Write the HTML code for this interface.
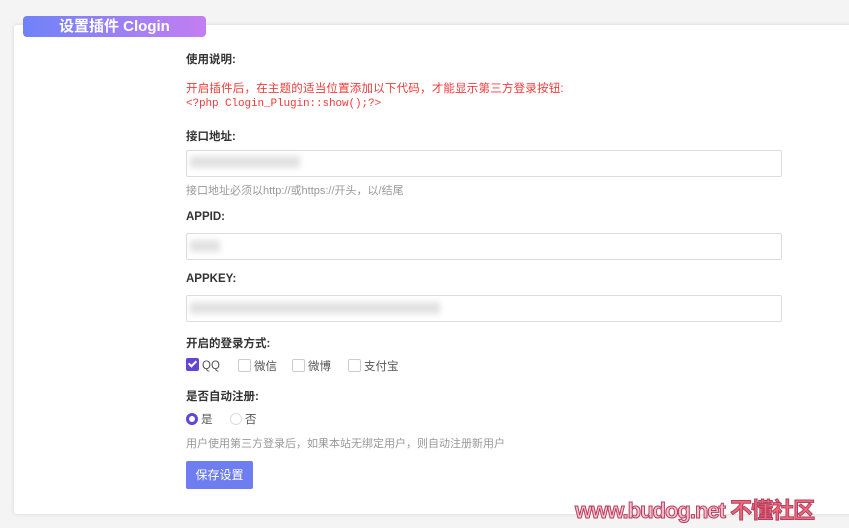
<!DOCTYPE html>
<html><head><meta charset="utf-8"><style>
body{margin:0;width:849px;height:528px;background:#f4f4f4;font-family:"Liberation Sans","Noto Sans CJK SC",sans-serif;position:relative;overflow:hidden}
.card{position:absolute;left:14px;top:25px;width:850px;height:489px;background:#fff;box-shadow:0 0 4px rgba(0,0,0,.12);border-radius:3px}
.badge{position:absolute;left:23px;top:16px;width:183px;height:21px;border-radius:4px;background:linear-gradient(90deg,#6f82f8,#c47ef2);color:#fff;font-weight:bold;font-size:15px;line-height:21px;text-indent:36px}
.a{position:absolute;left:186px;font-size:11.5px;color:#333}
.b{font-weight:bold}
.red{color:#f23a3a;letter-spacing:0.2px}
.hint{color:#999;font-size:11px}
.inp{position:absolute;left:186px;width:594px;height:25px;border:1px solid #ddd;border-radius:2px;background:#fff}
.blur{position:absolute;height:12px;background:#e2e2e2;filter:blur(3px)}
.cb{display:inline-block;width:11px;height:11px;border:1px solid #ccc;border-radius:2px;vertical-align:-2px;margin-right:3px}
.on{background:#6244d8;border-color:#6244d8;position:relative}
.on:after{content:"";position:absolute;left:3px;top:0px;width:3px;height:6px;border:solid #fff;border-width:0 2px 2px 0;transform:rotate(45deg)}
.rd{display:inline-block;width:10px;height:10px;border-radius:50%;border:1px solid #ddd;vertical-align:-2px;margin-right:3px}
.rdon{border:3px solid #6244d8;width:6px;height:6px}
.it{position:absolute;top:0;white-space:nowrap}
.btn{position:absolute;left:186px;top:461px;width:67px;height:28px;background:#6e7df0;color:#fff;font-size:12px;line-height:28px;text-align:center;border-radius:2px}
.wm{position:absolute;left:575px;top:493px;font-size:22px;font-weight:bold;color:#f9bfd0;-webkit-text-stroke:1px #b34060;letter-spacing:-1px}
.wm span{color:#f06a7a}
</style></head><body>
<div class="card"></div>
<div class="badge">设置插件 Clogin</div>
<div class="a b" style="top:51px">使用说明:</div>
<div class="a red" style="top:80px">开启插件后，在主题的适当位置添加以下代码，才能显示第三方登录按钮:</div>
<div class="a red" style="top:98px;font-family:'Liberation Mono',monospace;font-size:11px;letter-spacing:-0.1px">&lt;?php Clogin_Plugin::show();?&gt;</div>
<div class="a b" style="top:128px">接口地址:</div>
<div class="inp" style="top:150px"></div>
<div class="blur" style="left:190px;top:156px;width:110px"></div>
<div class="a hint" style="top:182px">接口地址必须以http://或https://开头，以/结尾</div>
<div class="a b" style="top:211px">APPID:</div>
<div class="inp" style="top:233px"></div>
<div class="blur" style="left:190px;top:240px;width:30px"></div>
<div class="a b" style="top:273px">APPKEY:</div>
<div class="inp" style="top:295px"></div>
<div class="blur" style="left:190px;top:302px;width:250px"></div>
<div class="a b" style="top:335px">开启的登录方式:</div>
<div class="a" style="top:358px;color:#555;width:300px;height:16px">
<span class="it" style="left:0"><span class="cb on"></span>QQ</span>
<span class="it" style="left:52px"><span class="cb"></span>微信</span>
<span class="it" style="left:106px"><span class="cb"></span>微博</span>
<span class="it" style="left:162px"><span class="cb"></span>支付宝</span></div>
<div class="a b" style="top:388px">是否自动注册:</div>
<div class="a" style="top:411px;color:#555;width:100px;height:16px">
<span class="it" style="left:0"><span class="rd rdon"></span>是</span>
<span class="it" style="left:44px"><span class="rd"></span>否</span></div>
<div class="a hint" style="top:435px">用户使用第三方登录后，如果本站无绑定用户，则自动注册新用户</div>
<div class="btn">保存设置</div>
<div class="wm">www.budog.net <span>不懂社区</span></div>
</body></html>
